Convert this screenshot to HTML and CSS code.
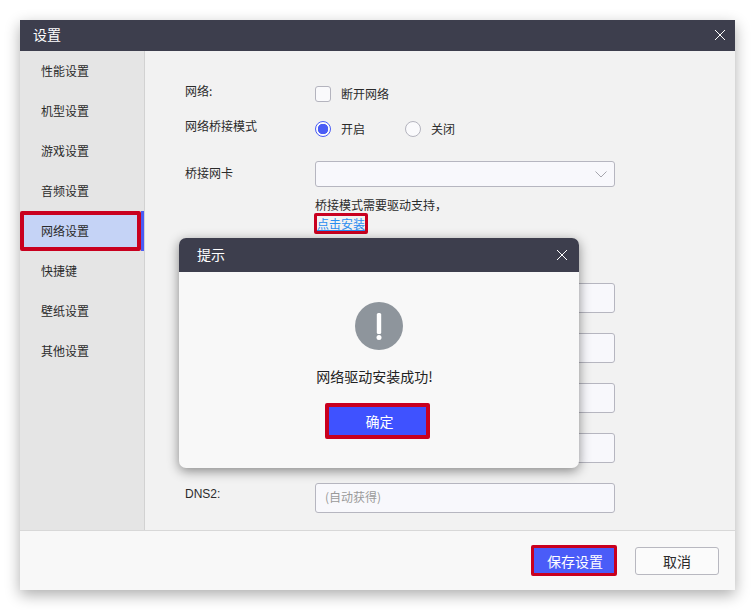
FILE: index.html
```html
<!DOCTYPE html>
<html lang="zh-CN">
<head>
<meta charset="utf-8">
<title>设置</title>
<link rel="stylesheet" href="styles.css">
</head>
<body>
<div class="window">
  <header class="win-head">
    <span class="win-title">设置</span>
    <svg class="close" width="12" height="12" viewBox="0 0 12 12"><path d="M1 1L11 11M11 1L1 11" stroke="#fff" stroke-width="1" fill="none"/></svg>
  </header>
  <div class="win-body">
    <nav class="side">
      <div class="side-item">性能设置</div>
      <div class="side-item">机型设置</div>
      <div class="side-item">游戏设置</div>
      <div class="side-item">音频设置</div>
      <div class="side-item active">网络设置</div>
      <div class="side-item">快捷键</div>
      <div class="side-item">壁纸设置</div>
      <div class="side-item">其他设置</div>
    </nav>
    <main class="form">
      <div class="row row-check">
        <div class="label lift">网络:</div>
        <span class="check"></span><span class="opt">断开网络</span>
      </div>
      <div class="row row-radio">
        <div class="label lift">网络桥接模式</div>
        <span class="radio on"></span><span class="opt opt-first">开启</span>
        <span class="radio"></span><span class="opt">关闭</span>
      </div>
      <div class="row row-select">
        <div class="label label-select">桥接网卡</div>
        <div class="select">
          <svg width="12" height="7" viewBox="0 0 12 7"><path d="M.5.5L6 6l5.500-5.500" stroke="#a5a5ad" fill="none"/></svg>
        </div>
      </div>
      <div class="hint">
        <div class="hint-text">桥接模式需要驱动支持，</div>
        <a class="link">点击安装</a>
      </div>
      <div class="row row-input first"><div class="label"></div><div class="input"></div></div>
      <div class="row row-input"><div class="label"></div><div class="input"></div></div>
      <div class="row row-input"><div class="label"></div><div class="input"></div></div>
      <div class="row row-input"><div class="label"></div><div class="input"></div></div>
      <div class="row row-input">
        <div class="label label-dns">DNS2:</div>
        <div class="input placeholder">(自动获得)</div>
      </div>
    </main>
  </div>
  <footer class="win-foot">
    <button class="btn btn-save">保存设置</button>
    <button class="btn btn-cancel">取消</button>
  </footer>

  <section class="modal">
    <header class="modal-head">
      <span class="modal-title">提示</span>
      <svg class="close" width="12" height="12" viewBox="0 0 12 12"><path d="M1 1L11 11M11 1L1 11" stroke="#fff" stroke-width="1" fill="none"/></svg>
    </header>
    <div class="modal-body">
      <svg class="alert" width="48" height="48" viewBox="0 0 48 48">
        <circle cx="24" cy="24" r="24" fill="#8e959c"/>
        <rect x="21.800" y="11" width="4.400" height="21" rx="1.500" fill="#fff"/>
        <circle cx="24" cy="35.500" r="2.500" fill="#fff"/>
      </svg>
      <p class="msg">网络驱动安装成功!</p>
      <button class="btn btn-ok">确定</button>
    </div>
  </section>
</div>
</body>
</html>
```

FILE: styles.css
```css
* { box-sizing: border-box; }
html, body { margin: 0; height: 100%; background: #fff; }
body {
  padding: 20px;
  font-family: "Noto Sans CJK SC", "Liberation Sans", sans-serif;
  font-size: 12px;
  color: #2b2b2b;
}
.window {
  position: relative;
  width: 715px;
  height: 570px;
  display: flex;
  flex-direction: column;
  box-shadow: 0 5px 14px rgba(0, 0, 0, .32);
  background: #f2f2f2;
}
.win-head {
  flex: none;
  height: 31px;
  background: #3d3e4d;
  color: #fff;
  display: flex;
  align-items: center;
  justify-content: space-between;
  padding: 0 9px 0 13px;
}
.win-title { font-size: 14px; line-height: 28px; height: 31px; }
.close { display: block; }
.win-head .close { margin-top: -2px; }
.win-body { flex: 1; display: flex; min-height: 0; }

.side {
  flex: none;
  width: 125px;
  background: #e5e5e5;
  border-right: 1px solid #d2d2d2;
}
.side-item {
  position: relative;
  height: 40px;
  line-height: 40px;
  padding-left: 21px;
}
.side-item.active {
  width: 121px;
  margin-right: 4px;
  padding-left: 17px;
  line-height: 32px;
  background: #c5d3f6;
  border: 4px solid #c9001f;
  border-radius: 2px;
}
.side-item.active::after {
  content: "";
  position: absolute;
  top: -4px;
  bottom: -4px;
  left: 117px;
  width: 3px;
  background: #4a5cf5;
}

.form { flex: 1; padding: 35px 0 0 40px; }
.row { display: flex; }
.label { flex: none; width: 130px; line-height: 16px; }
.lift { margin-top: -3px; }
.row-check { height: 16px; align-items: flex-start; }
.row-radio { height: 16px; margin-top: 19px; align-items: flex-start; }
.row-select { height: 26px; margin-top: 24px; }
.label-select { line-height: 24px; }
.check, .radio {
  flex: none;
  width: 16px;
  height: 16px;
  background: #fafafc;
  border: 1px solid #b4b4be;
}
.check { border-radius: 3px; }
.radio { border-radius: 50%; }
.radio.on {
  border-color: #4a5cf5;
  background: radial-gradient(circle, #4a5cf5 0 5px, #fafafc 5.500px);
}
.opt { margin-left: 10px; line-height: 16px; }
.opt-first { width: 64px; }
.select {
  width: 300px;
  height: 26px;
  background: #f8f8fc;
  border: 1px solid #b6b6c0;
  border-radius: 3px;
  display: flex;
  align-items: center;
  justify-content: flex-end;
  padding-right: 7px;
}
.hint { margin: 10px 0 0 130px; height: 38px; }
.hint-text { line-height: 15px; }
.link {
  display: inline-block;
  height: 21px;
  width: 54px;
  margin: 1px 0 0 -1px;
  line-height: 15px;
  color: #2a8df0;
  text-decoration: underline;
  border: 3px solid #c9001f;
  border-radius: 2px;
}
.row-input { height: 30px; margin-top: 20px; }
.row-input.first { margin-top: 48px; }
.label-dns { line-height: 22px; font-family: "Liberation Sans", sans-serif; }
.input {
  width: 300px;
  height: 30px;
  background: #f8f8fc;
  border: 1px solid #b6b6c0;
  border-radius: 3px;
}
.placeholder { padding-left: 9px; line-height: 26px; color: #9a9a9a; }

.win-foot {
  flex: none;
  height: 60px;
  background: #f8f8f8;
  border-top: 1px solid #d8d8d8;
  display: flex;
  align-items: flex-start;
  padding: 14px 16px 0 0;
  justify-content: flex-end;
}
.btn {
  font: inherit;
  font-size: 14px;
  padding: 0;
  cursor: pointer;
}
.btn-save {
  width: 86px;
  height: 31px;
  padding-left: 2px;
  background: #4a5cf8;
  color: #fff;
  border: 3px solid #c9001f;
  border-radius: 2px;
  margin-right: 18px;
}
.btn-cancel {
  width: 84px;
  height: 28px;
  margin-top: 2px;
  background: #fbfbfb;
  color: #2b2b2b;
  border: 1px solid #b8b8c0;
  border-radius: 3px;
}

.modal {
  position: absolute;
  left: 159px;
  top: 218px;
  width: 400px;
  height: 230px;
  background: #f8f8f8;
  border-radius: 7px;
  box-shadow: 0 3px 12px rgba(0, 0, 0, .45);
  overflow: hidden;
}
.modal-head {
  height: 34px;
  background: #3d3e4d;
  color: #fff;
  display: flex;
  align-items: center;
  justify-content: space-between;
  padding: 0 11px 0 18px;
}
.modal-title { font-size: 14px; line-height: 32px; height: 34px; }
.modal-body {
  display: flex;
  flex-direction: column;
  align-items: center;
  padding-top: 30px;
}
.alert { display: block; }
.msg {
  margin: 15px 9px 0 0;
  font-size: 14px;
  line-height: 22px;
  color: #222;
}
.btn-ok {
  width: 105px;
  height: 36px;
  margin: 16px 3px 0 0;
  padding-left: 4px;
  background: #3f52ff;
  color: #fff;
  border: 4px solid #c9001f;
  border-radius: 2px;
}
```
